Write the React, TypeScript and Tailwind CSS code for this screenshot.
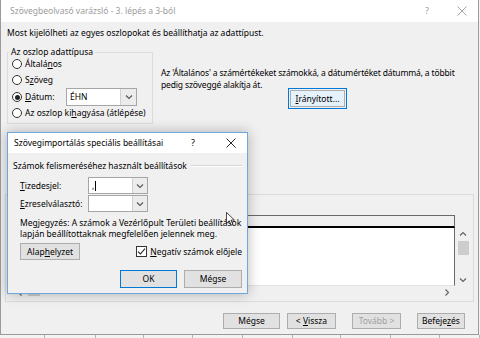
import type { ReactNode } from "react";

function Radio({ checked }: { checked?: boolean }) {
  return (
    <span className="flex h-[10px] w-[10px] shrink-0 items-center justify-center rounded-full border border-[#333] bg-white">
      {checked ? <span className="h-[5px] w-[5px] rounded-full bg-[#222]" /> : null}
    </span>
  );
}

function Chevron({ dir = "down", color = "#555" }: { dir?: "down" | "up" | "right" | "left"; color?: string }) {
  const paths = {
    down: "M1 1.5 L4 4.5 L7 1.5",
    up: "M1 4.5 L4 1.5 L7 4.5",
    right: "M2.5 0.5 L5.5 3.5 L2.5 6.5",
    left: "M5.5 0.5 L2.5 3.5 L5.5 6.5",
  };
  const box = dir === "down" || dir === "up" ? "0 0 8 6" : "0 0 8 7";
  return (
    <svg width="8" height={dir === "down" || dir === "up" ? 6 : 7} viewBox={box} fill="none">
      <path d={paths[dir]} stroke={color} strokeWidth="1.1" />
    </svg>
  );
}

function Combo({ width, value, arrowWidth = 15 }: { width: string; value?: ReactNode; arrowWidth?: number }) {
  return (
    <div className={`flex h-full ${width} border border-[#a6a6a6] bg-white`}>
      <div className="flex flex-1 items-center pl-[3px]">{value}</div>
      <div
        className="flex items-center justify-center border-l border-[#d0d0d0] bg-[#ececec]"
        style={{ width: arrowWidth }}
      >
        <Chevron />
      </div>
    </div>
  );
}

function Button({ children, className = "", disabled }: { children: ReactNode; className?: string; disabled?: boolean }) {
  return (
    <div
      className={`flex h-[16px] items-center justify-center whitespace-pre border border-[#adadad] bg-[#e1e1e1] ${
        disabled ? "text-[#a0a0a0]" : "text-black"
      } ${className}`}
    >
      {children}
    </div>
  );
}

function CloseIcon({ color }: { color: string }) {
  return (
    <svg width="10" height="10" viewBox="0 0 10 10" fill="none">
      <path d="M0.5 0.5 L9.5 9.5 M9.5 0.5 L0.5 9.5" stroke={color} strokeWidth="0.9" />
    </svg>
  );
}

export default function App() {
  const columns = [45, 51, 48, 49, 50, 50, 48, 50, 49, 40];

  return (
    <div
      className="relative h-[338px] w-[480px] overflow-hidden bg-[#f3f3f3] text-[8.5px] leading-[12px] text-black"
      style={{ fontFamily: '"Segoe UI", "Noto Sans", sans-serif' }}
    >
      {/* main wizard window */}
      <div className="flex h-[335px] w-[479px] flex-col border-x border-b border-[#9a9a9a]">
        <div className="flex h-[22px] shrink-0 items-center bg-white pl-[9px] pr-[11px] text-[#9b9b9b]">
          <span className="flex-1">Szövegbeolvasó varázsló - 3. lépés a 3-ból</span>
          <span className="mr-[28px] text-[9px]">?</span>
          <CloseIcon color="#9b9b9b" />
        </div>

        <div className="flex flex-1 flex-col bg-[#f0f0f0] pl-[4px] pr-[4px]">
          <p className="ml-[2px] mt-[5px] h-[12px]">
            Most kijelölheti az egyes oszlopokat és beállíthatja az adattípust.
          </p>

          <div className="mt-[7px] flex items-start">
            <fieldset className="ml-[2px] w-[146px] border border-[#dcdcdc] px-[4px] pb-[4px]">
              <legend className="ml-[-3px] px-[2px]">Az oszlop adattípusa</legend>
              <div className="flex flex-col">
                <label className="flex h-[12px] items-center gap-[3px]">
                  <Radio />
                  <span>
                    Általá<u>n</u>os
                  </span>
                </label>
                <label className="mt-[4px] flex h-[12px] items-center gap-[3px]">
                  <Radio />
                  <span>
                    S<u>z</u>öveg
                  </span>
                </label>
                <div className="mt-[2px] flex h-[18px] items-center gap-[3px]">
                  <Radio checked />
                  <span className="w-[38px]">
                    <u>D</u>átum:
                  </span>
                  <Combo width="w-[71px]" value="ÉHN" arrowWidth={16} />
                </div>
                <label className="mt-[1px] flex h-[12px] items-center gap-[3px]">
                  <Radio />
                  <span>
                    Az oszlop ki<u>h</u>agyása (átlépése)
                  </span>
                </label>
              </div>
            </fieldset>

            <div className="ml-[8px] flex flex-1 flex-col pt-[21px]">
              <p className="whitespace-nowrap tracking-[-0.15px]">
                Az 'Általános' a számértékeket számokká, a dátumértéket dátummá, a többit
                <br />
                pedig szöveggé alakítja át.
              </p>
              <div className="-mt-[3px] self-center border border-[#0078d7] p-px">
                <div className="flex h-[17px] w-[55px] items-center justify-center border border-[#adadad] bg-[#e5f1fb]">
                  <span>
                    <u>I</u>rányított...
                  </span>
                </div>
              </div>
            </div>
          </div>

          <fieldset className="mt-[64px] border border-[#dcdcdc] pb-[2px] pl-[6px] pr-[2px]">
            <legend className="ml-[0px] px-[2px]">Az adatok előnézete</legend>
            <div className="mt-[15px] grid grid-cols-[1fr_16px] grid-rows-[13px_58px_13px]">
              <div className="border-x border-t border-[#696969] border-b-2 border-b-black bg-[#f0f0f0]" />
              <div />
              <div className="border-b border-r border-[#696969] border-b-[#e3e3e3] bg-white" />
              <div className="flex flex-col items-center justify-between py-[3px]">
                <Chevron dir="up" color="#606060" />
                <div className="mb-auto mt-[4px] h-[14px] w-[11px] bg-[#cdcdcd]" />
                <Chevron dir="down" color="#606060" />
              </div>
              <div className="col-span-2 flex items-center pl-[4px] pr-[20px]">
                <Chevron dir="left" color="#606060" />
                <div className="ml-[4px] mt-[2px] h-[5px] w-[12px] bg-[#cdcdcd]" />
                <div className="flex-1" />
                <Chevron dir="right" color="#606060" />
              </div>
            </div>
          </fieldset>

          <div className="mr-[9px] mt-[11px] flex justify-end">
            <Button className="w-[57px]">Mégse</Button>
            <Button className="ml-[7px] w-[49px]">
              {"< "}
              <u>V</u>issza
            </Button>
            <Button className="ml-[16px] w-[49px]" disabled>
              {"Tovább >"}
            </Button>
            <Button className="ml-[16px] w-[48px]">
              Befeje<u>z</u>és
            </Button>
          </div>
        </div>
      </div>

      {/* sheet column strip below the window */}
      <div className="flex h-[3px]">
        {columns.map((w, i) => (
          <div key={i} className="h-full border-r border-[#b4b4b4]" style={{ width: w }} />
        ))}
      </div>

      {/* special import settings dialog */}
      <div className="absolute left-[7px] top-[132px] flex h-[162px] w-[241px] flex-col border border-[#6ea6de] bg-[#f0f0f0] shadow-[0_0_12px_rgba(0,0,0,0.28)]">
        <div className="flex h-[20px] shrink-0 items-center bg-white pl-[6px] pr-[11px]">
          <span className="flex-1">Szövegimportálás speciális beállításai</span>
          <span className="mr-[31px] text-[9px]">?</span>
          <CloseIcon color="#111" />
        </div>
        <div className="flex flex-1 flex-col px-[5px]">
          <div className="mt-[7px] flex h-[12px] items-center">
            <span>Számok felismeréséhez használt beállítások</span>
            <div className="ml-[4px] flex-1 border-t border-b border-t-[#d5d5d5] border-b-white" />
          </div>

          <div className="ml-[7px] mt-[5px] flex h-[17px] items-center">
            <span className="w-[68px]">
              <u>T</u>izedesjel:
            </span>
            <Combo
              width="w-[60px]"
              value={
                <span className="flex items-center">
                  ,<span className="ml-px h-[10px] w-px bg-black" />
                </span>
              }
            />
          </div>
          <div className="ml-[7px] mt-px flex h-[17px] items-center">
            <span className="w-[68px]">
              <u>E</u>zreselválasztó:
            </span>
            <Combo width="w-[60px]" />
          </div>

          <p className="ml-[7px] mt-[5px] whitespace-nowrap leading-[11px]">
            Megjegyzés: A számok a Vezérlőpult Területi beállítások
            <br />
            lapján beállítottaknak megfelelően jelennek meg.
          </p>

          <div className="ml-[7px] mt-[4px] flex h-[17px] items-center">
            <Button className="h-[17px] w-[61px]">
              Alap<u>h</u>elyzet
            </Button>
            <div className="ml-[56px] flex items-center gap-[3px] whitespace-nowrap">
              <span className="flex h-[11px] w-[11px] items-center justify-center border border-[#333] bg-white">
                <svg width="9" height="9" viewBox="0 0 9 9" fill="none">
                  <path d="M1 4.6 L3.4 7 L8 1.6" stroke="#222" strokeWidth="1.1" />
                </svg>
              </span>
              <span>
                <u>N</u>egatív számok előjele
              </span>
            </div>
          </div>

          <div className="mt-[10px] flex justify-end">
            <div className="flex h-[18px] w-[57px] items-center justify-center border border-[#0078d7] bg-[#e1e1e1]">
              OK
            </div>
            <Button className="ml-[7px] h-[18px] w-[58px]">Mégse</Button>
          </div>
        </div>
      </div>

      {/* mouse pointer */}
      <svg className="absolute left-[226px] top-[212px]" width="9" height="14" viewBox="0 0 12 19">
        <path d="M0.5 0.5 L0.5 15.5 L4.3 11.8 L7 17.8 L9.2 16.8 L6.6 10.9 L11.3 10.9 Z" fill="#fff" stroke="#000" strokeWidth="1" />
      </svg>
    </div>
  );
}
